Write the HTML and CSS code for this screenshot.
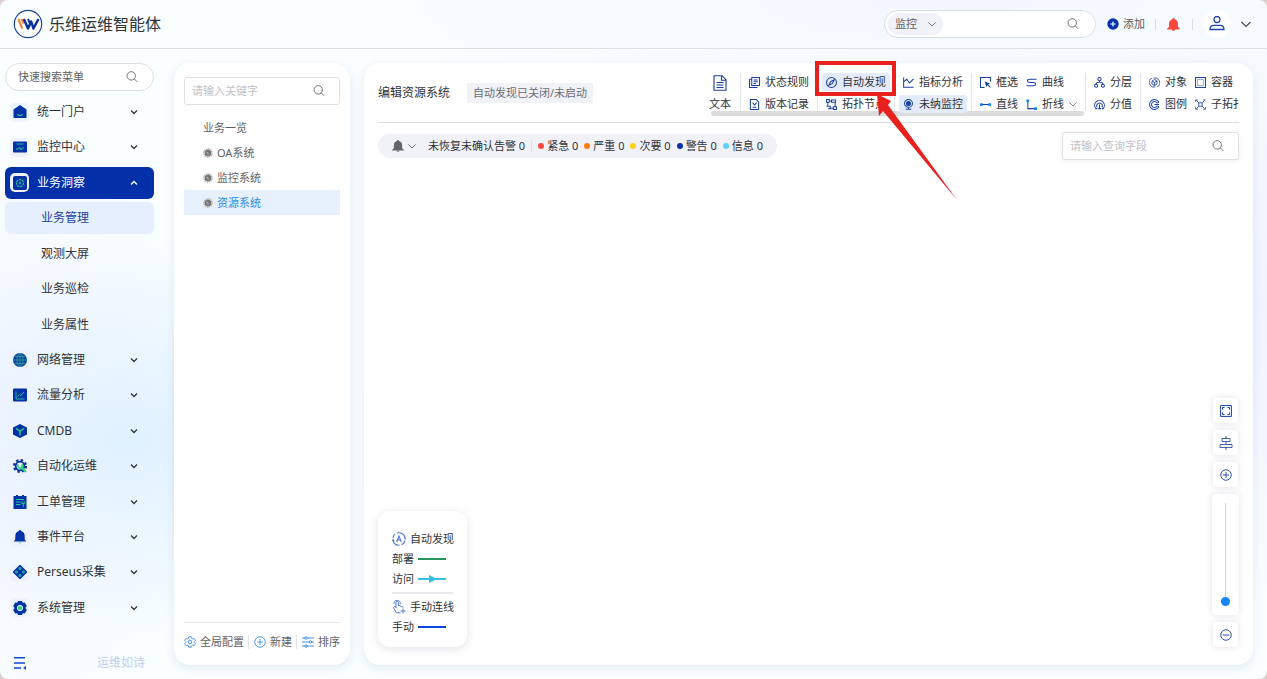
FILE: index.html
```html
<!DOCTYPE html>
<html lang="zh-CN">
<head>
  <meta charset="UTF-8" />
  <meta name="viewport" content="width=device-width, initial-scale=1.0"/>
  <title>乐维运维智能体</title>
  <link rel="stylesheet" href="styles.css">
</head>
<body>
  <!-- 图标 -->
  <svg class="sprite" aria-hidden="true">
    <symbol id="search" viewBox="0 0 16 16"><g fill="none" stroke="currentColor" stroke-width="1.2"><circle cx="7" cy="6.500" r="5.600"/><path d="M11 10.500l4 4"/></g></symbol>
    <symbol id="down" viewBox="0 0 10 10"><path d="M.5 3L5 7.500 9.500 3" fill="none" stroke="currentColor" stroke-width="1.1"/></symbol>
    <symbol id="caret" viewBox="0 0 8 8"><path d="M1 2.500l3 3 3-3" fill="none" stroke="currentColor" stroke-width="1.3"/></symbol>
    <symbol id="bell" viewBox="0 0 16 16"><path d="M8 0c.9 0 1.400.6 1.400 1.400C12.300 2.200 13.500 4.300 13.500 7V11l2.200 2v1H.3v-1l2.200-2V7c0-2.700 1.200-4.800 4.100-5.600C6.600.6 7.100 0 8 0zM6 14.300h4a2 1.500 0 0 1-4 0z" fill="currentColor"/></symbol>
    <symbol id="plus" viewBox="0 0 16 16"><g fill="none" stroke="currentColor" stroke-width="1.2"><circle cx="8" cy="8" r="7"/><path d="M8 4v8M4 8h8"/></g></symbol>
    <symbol id="minus" viewBox="0 0 16 16"><g fill="none" stroke="currentColor" stroke-width="1.2"><circle cx="8" cy="8" r="7"/><path d="M3.500 8h9"/></g></symbol>
    <symbol id="gear" viewBox="0 0 16 16"><g fill="none" stroke="currentColor" stroke-width="1.2" stroke-linejoin="round"><path d="M6.500 1h3l.6 2 1.500.9 2.100-.5 1.500 2.600L13.700 7.500v1.200l1.500 1.400-1.500 2.600-2.100-.5-1.500.9-.6 2h-3l-.6-2-1.500-.9-2.100.5L.8 10.100l1.500-1.400V7.500L.8 6l1.500-2.600 2.100.5L5.900 3z"/><circle cx="8" cy="8" r="2.400"/></g></symbol>
    <symbol id="hex" viewBox="0 0 10 10"><circle cx="5" cy="5" r="4.300" fill="none" stroke="#b4b4b4" stroke-width="1.200" stroke-dasharray="1.500 .7"/><path d="M5 1.200l3.300 1.900v3.800L5 8.800 1.700 6.900V3.100z" fill="#757575"/><path d="M3.200 4l1.800.8v2.200" stroke="#ccc" stroke-width=".7" fill="none"/></symbol>
  </svg>

  <div class="app">
    <header class="topbar">
      <svg class="logo" viewBox="0 0 30 30" aria-hidden="true">
        <circle cx="15" cy="15" r="13.700" fill="#fff" stroke="#1b459f" stroke-width="1.200"/>
        <path d="M5.300 10l4 9.500M8.600 10l2 4.700" stroke="#f58232" stroke-width="2" fill="none"/>
        <path d="M10.800 10l4.200 9.500 3.200-7 2.200 7L25.500 10" stroke="#0a33a0" stroke-width="2.500" fill="none" stroke-linejoin="round"/>
        <path d="M15 10l2 4.500" stroke="#0a33a0" stroke-width="2"/>
      </svg>
      <h1 class="brand">乐维运维智能体</h1>
      <div class="top-search">
        <div class="scope">
          <select aria-label="搜索范围"><option>监控</option></select>
          <svg class="i8"><use href="#down"/></svg>
        </div>
        <input type="text" aria-label="搜索">
        <svg class="i12"><use href="#search"/></svg>
      </div>
      <button class="add">
        <svg class="i12" viewBox="0 0 12 12"><circle cx="6" cy="6" r="5.700" fill="#0632a8"/><path d="M6 3.400v5.200M3.400 6h5.200" stroke="#fff" stroke-width="1.200"/></svg>
        添加
      </button>
      <span class="vline"></span>
      <button class="alarm" aria-label="告警"><svg class="i13"><use href="#bell"/></svg></button>
      <span class="vline"></span>
      <button class="avatar" aria-label="用户">
        <svg class="i16" viewBox="0 0 16 16"><g fill="none" stroke="#1c42a6" stroke-width="1.300"><circle cx="8" cy="3.500" r="3"/><path d="M1 13.500c0-3 2-4.200 4-4.200h6c2 0 4 1.200 4 4.200z"/></g></svg>
      </button>
      <button class="more" aria-label="更多"><svg class="i10"><use href="#down"/></svg></button>
    </header>

    <div class="body">
      <!-- 左侧菜单 -->
      <aside class="sidebar">
        <div class="field round">
          <input type="text" aria-label="快速搜索菜单" placeholder="快速搜索菜单">
          <svg class="i12"><use href="#search"/></svg>
        </div>
        <nav class="menu">
          <a href="#" class="item"><span class="tile"><svg viewBox="0 0 14 14"><path d="M7 0l6.500 4.500V13h-13V4.500z" fill="#0433a8"/><path d="M4.500 9.500q2.500 2 5 0" stroke="#2de08a" stroke-width="1.200" fill="none"/></svg></span>统一门户<svg class="i8"><use href="#caret"/></svg></a>
          <a href="#" class="item"><span class="tile"><svg viewBox="0 0 14 14"><rect y="1.500" width="14" height="11" rx="1" fill="#0433a8"/><path d="M3.500 4h7M3 9h2.500l1-2 1.500 3 1-2h2" stroke="#26b894" fill="none"/></svg></span>监控中心<svg class="i8"><use href="#caret"/></svg></a>
          <a href="#" class="item active"><span class="tile"><svg viewBox="0 0 14 14"><rect width="14" height="14" rx="2" fill="#0433a8"/><circle cx="7" cy="7" r="3.500" fill="none" stroke="#26c894" stroke-width="1.200" stroke-dasharray="2.300 .7"/><path d="M6.200 5.600v2.800L8.500 7z" fill="#26c894"/></svg></span>业务洞察<svg class="i8"><use href="#caret"/></svg></a>
          <a href="#" class="sub current">业务管理</a>
          <a href="#" class="sub">观测大屏</a>
          <a href="#" class="sub">业务巡检</a>
          <a href="#" class="sub">业务属性</a>
          <a href="#" class="item"><span class="tile"><svg viewBox="0 0 14 14"><circle cx="7" cy="7" r="7" fill="#0d3da0"/><g fill="none" stroke="#2aa69b" stroke-width=".8"><ellipse cx="7" cy="7" rx="3" ry="6.800"/><path d="M7 0v14M0 7h14M1.500 3.500h11M1.500 10.500h11"/></g></svg></span>网络管理<svg class="i8"><use href="#caret"/></svg></a>
          <a href="#" class="item"><span class="tile"><svg viewBox="0 0 14 14"><rect y=".5" width="14" height="13" rx="1" fill="#0433a8"/><path d="M3 3.500v7.500h8.500M4.500 8.500l2-2 1.500 1 3-3.500" stroke="#26b894" fill="none"/></svg></span>流量分析<svg class="i8"><use href="#caret"/></svg></a>
          <a href="#" class="item"><span class="tile"><svg viewBox="0 0 14 14"><path d="M7 0l7 3.500v7L7 14l-7-3.500v-7z" fill="#0433a8"/><path d="M3 4.500l4 2.500 4-2.500M7 7v4.500" stroke="#2de08a" stroke-width="1.200" fill="none"/></svg></span>CMDB<svg class="i8"><use href="#caret"/></svg></a>
          <a href="#" class="item"><span class="tile"><svg viewBox="0 0 14 14"><circle cx="7" cy="7" r="5.900" fill="none" stroke="#0433a8" stroke-width="2.200" stroke-dasharray="2.400 2.230"/><circle cx="7" cy="7" r="4.300" fill="#e9f2f8" stroke="#0433a8" stroke-width="1.800"/><path d="M5.300 5.300a2.300 2.300 0 1 0 3.400 0" fill="none" stroke="#2ddb7c" stroke-width="1.700"/><path d="M8.300 8.300l4.700 4.700" stroke="#2ddb7c" stroke-width="2.200"/></svg></span>自动化运维<svg class="i8"><use href="#caret"/></svg></a>
          <a href="#" class="item"><span class="tile"><svg viewBox="0 0 14 14"><path d="M.5 1h2.500V0h2v1h4V0h2v1h2.500v13H.5z" fill="#0433a8"/><path d="M3 4.500h8M3 7h4.500M3 9.500h4.500M10.300 9v3M8.800 6.500v2h3v-2" stroke="#26c894" fill="none"/></svg></span>工单管理<svg class="i8"><use href="#caret"/></svg></a>
          <a href="#" class="item"><span class="tile"><svg viewBox="0 0 14 14"><path d="M7 0c.7 0 1 .5 1 1 2.500.5 3.700 2.500 3.700 5v3.500l1.600 2H.7l1.600-2V6c0-2.500 1.200-4.500 3.700-5 0-.5.3-1 1-1z" fill="#0433a8"/><path d="M5.500 12.500h3q-1.500 2-3 0z" fill="#2de08a"/></svg></span>事件平台<svg class="i8"><use href="#caret"/></svg></a>
          <a href="#" class="item"><span class="tile"><svg viewBox="0 0 14 14"><path d="M7-.5L14.500 7 7 14.500-.5 7z" fill="#0433a8"/><g fill="#178daa" stroke="#2ac5a0" stroke-width=".6"><circle cx="7" cy="3.500" r="1.200"/><circle cx="3.500" cy="7" r="1.200"/><circle cx="10.500" cy="7" r="1.200"/><circle cx="7" cy="10.500" r="1.200"/></g></svg></span>Perseus采集<svg class="i8"><use href="#caret"/></svg></a>
          <a href="#" class="item"><span class="tile"><svg viewBox="0 0 14 14"><path d="M5 0h4l.8 1.800 2-.2 2 3.400L12.500 7l1.300 2-2 3.400-2-.2L9 14H5l-.8-1.800-2 .2L.2 9l1.300-2L.2 5l2-3.400 2 .2z" fill="#0433a8"/><circle cx="7" cy="7" r="2.700" fill="#2ddb7c" stroke="#d9f4ee"/></svg></span>系统管理<svg class="i8"><use href="#caret"/></svg></a>
        </nav>
        <div class="side-foot">
          <button aria-label="收起菜单"><svg class="i14" viewBox="0 0 14 14"><path d="M1 1.800h11M1 7h11M1 12h7" stroke="#1145cf" stroke-width="1.400"/><path d="M13 9.800v4L10 12z" fill="#1145cf"/></svg></button>
          <span>运维如诗</span>
        </div>
      </aside>

      <!-- 业务树 -->
      <section class="card tree">
        <div class="field">
          <input type="text" aria-label="关键字" placeholder="请输入关键字">
          <svg class="i12"><use href="#search"/></svg>
        </div>
        <ul>
          <li><a href="#">业务一览</a></li>
          <li><a href="#"><svg class="i10"><use href="#hex"/></svg>OA系统</a></li>
          <li><a href="#"><svg class="i10"><use href="#hex"/></svg>监控系统</a></li>
          <li><a href="#" class="current"><svg class="i10"><use href="#hex"/></svg>资源系统</a></li>
        </ul>
        <div class="tree-foot">
          <button><svg class="i12"><use href="#gear"/></svg>全局配置</button>
          <button><svg class="i12"><use href="#plus"/></svg>新建</button>
          <button><svg class="i12" viewBox="0 0 12 12"><g fill="#fff" stroke="currentColor"><path d="M0 2h12M0 6h12M0 10h12"/><circle cx="4" cy="2" r="1.200"/><circle cx="8.500" cy="6" r="1.200"/><circle cx="4" cy="10" r="1.200"/></g></svg>排序</button>
        </div>
      </section>

      <!-- 编辑区 -->
      <main class="card editor">
        <div class="editor-head">
          <h2>编辑资源系统</h2>
          <span class="state">自动发现已关闭/未启动</span>
          <div class="toolbar">
            <div class="tools">
              <div class="group single">
                <button><svg class="i16" viewBox="0 0 16 16"><path d="M2 .700h8l4 4v10.600H2zM9.500.7v4.500H14M4.500 7.500h7M4.500 10h7M4.500 12.500h7"/></svg>文本</button>
              </div>
              <div class="group">
                <button><svg class="i11" viewBox="0 0 12 12"><path d="M3 .600h8.400v8.800H3zM.6 2.500V11.400h8.500M3 2.500H.6M5 3.200h4.500M5 5.200h4.500M5 7.200h2.500"/></svg>状态规则</button>
                <button><svg class="i11" viewBox="0 0 12 12"><path d="M1.500.600h6.500l2.500 2.500v8.300h-9zM4 4l2 2.500L8.300 4M4 9h4"/></svg>版本记录</button>
              </div>
              <div class="group">
                <button class="on"><svg class="i11" viewBox="0 0 12 12"><circle cx="6" cy="6" r="5.400"/><path d="M8.800 3.200L7 7 3.200 8.800 5 5z"/></svg>自动发现</button>
                <button><svg class="i11" viewBox="0 0 12 12"><path d="M.600.600h3v3h-3zM6 1h4.500v2.500H6zM8 8.500h3.400v2.900H8zM3.600 2.200H6M2 3.600V8M.6 8h4v2.500h-2M4.600 10H8M10 3.500v5"/></svg>拓扑节点</button>
              </div>
              <div class="group">
                <button><svg class="i11" viewBox="0 0 12 12"><path d="M.700.500v10.700h10.800M1 5l3-2.500 3.200 4L11.500 2"/></svg>指标分析</button>
                <button class="on"><svg class="i11" viewBox="0 0 12 12"><circle cx="6" cy="4.800" r="4.300"/><circle cx="6" cy="4.800" r="2.200" fill="currentColor"/><path d="M6 9v2M3 11.300h6"/></svg>未纳监控</button>
              </div>
              <div class="group two">
                <button><svg class="i11" viewBox="0 0 12 12"><path d="M5 11.400H.6V.600h10.800V5M11.400 11.400L8 8"/><path d="M5 5l6 2-2.500 1.500L7 11z" fill="currentColor" stroke="none"/></svg>框选</button>
                <button><svg class="i11" viewBox="0 0 12 12"><path d="M11.500 2.500H4.500Q1.500 2.500 1.500 4T4 6h4q2.500 0 2.500 1.800T7.500 9.500H.5"/></svg>曲线</button>
                <button><svg class="i11" viewBox="0 0 12 12"><path d="M1 6h10"/><path d="M0 4.500h3v3H0zM9 4.500h3v3H9z" fill="#1785ff" stroke="none"/></svg>直线</button>
                <button><svg class="i11" viewBox="0 0 12 12"><path d="M2 2v8.500h9"/><path d="M.500.500h3v3h-3zM9 9h3v3H9z" fill="#1785ff" stroke="none"/></svg>折线<svg class="i8"><use href="#down"/></svg></button>
              </div>
              <div class="group">
                <button><svg class="i11" viewBox="0 0 12 12"><circle cx="6" cy="2.400" r="1.800"/><circle cx="2.300" cy="9.500" r="1.700"/><circle cx="9.700" cy="9.500" r="1.700"/><path d="M6 4.200v1.500M2.200 7.800Q2.500 5.800 6 5.800t3.800 2"/></svg>分层</button>
                <button><svg class="i11" viewBox="0 0 12 12"><path d="M2 10.500a5.300 5.300 0 1 1 8 0H8.500M2 10.500h1.500M3.300 9a3.100 3.100 0 1 1 5.400 0M6 6v4.500M4.500 10.500h3"/></svg>分值</button>
              </div>
              <div class="group two">
                <button><svg class="i11" viewBox="0 0 12 12"><g stroke-width=".9"><path d="M6 2.800l2.800 1.600v3.200L6 9.200 3.200 7.600V4.400zM3.200 4.400L6 6l2.800-1.600M6 6v3M3 1.500Q-1.500 3 1 8.500M9 10.500Q13.500 9 11 3.500M5 1.200Q9 0 11 3.500M7 10.800Q3 12 1 8.500"/></g></svg>对象</button>
                <button><svg class="i11" viewBox="0 0 12 12"><rect x=".6" y=".6" width="10.800" height="10.800"/><rect x="2.800" y="2.800" width="6.400" height="6.400" stroke="#9caed8"/></svg>容器</button>
                <button><svg class="i11" viewBox="0 0 12 12"><path d="M10.800 3.500A5.400 5.400 0 1 0 10.800 8.500M10.800 3.500L9 4.500M10.800 8.500L9 7.500M8.800 4.500a3.200 3.200 0 1 0 0 3M11 6H6"/></svg>图例</button>
                <button><svg class="i11" viewBox="0 0 12 12"><g stroke-width=".9"><rect x="4.200" y="4.200" width="3.600" height="3.600"/><path d="M4.200 4.200L1.500 1.500M7.800 4.200l2.700-2.700M4.200 7.800l-2.700 2.700M7.800 7.800l2.700 2.700M.5 3V1H3M9 1h2.500M.5 9v2H3M9 11h2.500V9"/></g></svg>子拓扑</button>
              </div>
            </div>
            <div class="scrollbar"></div>
          </div>
        </div>

        <div class="filters">
          <div class="alerts">
            <svg class="i12 mute"><use href="#bell"/></svg>
            <svg class="i8 fold"><use href="#down"/></svg>
            <span class="total">未恢复未确认告警 0</span>
            <span class="level urgent">紧急 0</span>
            <span class="level serious">严重 0</span>
            <span class="level minor">次要 0</span>
            <span class="level warn">警告 0</span>
            <span class="level info">信息 0</span>
          </div>
          <div class="field query">
            <input type="text" aria-label="查询字段" placeholder="请输入查询字段">
            <svg class="i12"><use href="#search"/></svg>
          </div>
        </div>

        <div class="canvas">
          <div class="legend">
            <div class="legend-title"><svg class="i14" viewBox="0 0 14 14"><path d="M5 1.100A6.200 6.200 0 0 1 13 5.500M13 8.500A6.200 6.200 0 0 1 9.500 12.700M7.500 13.200A6.200 6.200 0 0 1 1 8.500M.9 6A6.200 6.200 0 0 1 3 2.200M4.700 10L7 4 9.300 10M5.400 8h3.200" fill="none" stroke="#4a78d8" stroke-width="1.100"/><path d="M11.500 5.500H14l-.5 2.500zM0 9l1-2.500L2.800 9z" fill="#4a78d8"/></svg>自动发现</div>
            <div class="legend-row">部署<span class="line deploy"></span></div>
            <div class="legend-row">访问<svg class="visit" viewBox="0 0 28 8"><path d="M0 4h28" stroke="#36bfe0" stroke-width="2"/><path d="M11 0l8 4-8 4z" fill="#36bfe0"/></svg></div>
            <hr>
            <div class="legend-title"><svg class="i14" viewBox="0 0 14 14"><g fill="none" stroke="#4a78d8"><path d="M4 8V2.500a1.200 1.200 0 0 1 2.400 0V6M6.400 5.500q1-.5 1.600.5 1-.4 1.500.6 1.500-.3 1.500 1M4 7L2.500 6.500Q1 7 2 8.500l2.500 4.300h4M2 4a3.200 3.200 0 1 1 6.300 0M11 8.500v5M8.500 11h5"/></g></svg>手动连线</div>
            <div class="legend-row">手动<span class="line manual"></span></div>
          </div>

          <div class="zoom">
            <button aria-label="全屏"><svg class="i12" viewBox="0 0 12 12"><path d="M.600.600h10.800v10.800H.6zM2.500 4.500v-2h2M7.500 2.500h2v2M9.500 7.500v2h-2M4.500 9.500h-2v-2" fill="none" stroke="currentColor"/></svg></button>
            <button aria-label="居中"><svg class="i14" viewBox="0 0 14 14"><path d="M7 0v2.500M7 5.500v3M7 11.500V14M3 2.500h8v3H3zM1 8.500h12v3H1z" fill="none" stroke="currentColor" stroke-width=".8"/></svg></button>
            <button aria-label="放大"><svg class="i12"><use href="#plus"/></svg></button>
            <div class="slider"><input type="range" min="0" max="100" value="0" aria-label="缩放"></div>
            <button aria-label="缩小"><svg class="i12"><use href="#minus"/></svg></button>
          </div>
        </div>

        <!-- 操作提示 -->
        <svg class="hint" viewBox="0 0 144 140" aria-hidden="true">
          <rect x="3" y="2" width="77" height="31" fill="none" stroke="#e8201e" stroke-width="4"/>
          <path d="M63 33l14 7-3 4 69 95-74-89-4 5z" fill="#e8201e"/>
        </svg>
      </main>
    </div>
  </div>
</body>
</html>
```
FILE: styles.css
```css
* { box-sizing: border-box; }
body {
  margin: 0;
  background: #dccfd0;
  font-family: "Noto Sans", "Noto Sans CJK SC", sans-serif;
  font-size: 11px;
  line-height: 16px;
  color: #303338;
}
h1, h2, ul { margin: 0; padding: 0; font-weight: normal; }
ul { list-style: none; }
a { color: inherit; text-decoration: none; }
svg { display: block; flex: none; }
button, input, select {
  font: inherit;
  color: inherit;
  border: none;
  background: none;
  padding: 0;
  margin: 0;
  outline: none;
}
button { cursor: pointer; white-space: nowrap; }
.sprite { display: none; }
.i8 { width: 8px; height: 8px; }
.i10 { width: 10px; height: 10px; }
.i11 { width: 11px; height: 11px; }
.i12 { width: 12px; height: 12px; }
.i13 { width: 13px; height: 13px; }
.i14 { width: 14px; height: 14px; }
.i16 { width: 16px; height: 16px; }

.app {
  height: 100vh;
  display: flex;
  flex-direction: column;
  border-radius: 8px;
  overflow: hidden;
  background:
    radial-gradient(ellipse 240px 200px at 130px 440px, #e0f1ff, rgba(224,241,255,0)),
    radial-gradient(ellipse 200px 300px at 0 430px, #f3f5ff, rgba(243,245,255,0)),
    radial-gradient(ellipse 500px 300px at 100% 45%, #eef3ff, rgba(238,243,255,0)),
    radial-gradient(ellipse 600px 120px at 75% 0, #f3f8ff, rgba(243,248,255,0)),
    #f9feff;
}

/* 顶栏 */
.topbar {
  height: 49px;
  display: flex;
  align-items: center;
  padding: 0 16px 0 13px;
  border-bottom: 1px solid #dde1e4;
}
.logo { width: 30px; height: 30px; }
.brand {
  font-size: 16px;
  line-height: 24px;
  margin-left: 6px;
  margin-right: auto;
}
.top-search {
  width: 212px;
  height: 28px;
  display: flex;
  align-items: center;
  padding: 0 16px 0 3px;
  border: 1px solid #dcdde1;
  border-radius: 14px;
  background: #fff;
}
.top-search input { flex: 1; min-width: 0; }
.top-search > svg { color: #666; }
.scope {
  width: 55px;
  height: 22px;
  display: flex;
  align-items: center;
  justify-content: space-between;
  padding: 0 7px;
  border-radius: 11px;
  background: #f1f1f8;
  color: #606266;
}
.scope select { appearance: none; }
.add {
  display: flex;
  align-items: center;
  gap: 4px;
  margin: 0 10px 0 11px;
  color: #55585e;
}
.vline { width: 1px; height: 11px; background: #dadce2; }
.alarm { margin: 0 12px 0 11px; color: #ff463c; }
.avatar {
  width: 28px;
  height: 28px;
  display: grid;
  place-items: center;
  margin: 0 10px;
  border-radius: 50%;
  background: #fff;
}
.more { color: #444; }

.body {
  flex: 1;
  min-height: 0;
  display: flex;
  gap: 14px;
  padding: 14px 14px 14px 5px;
}
.card {
  background: #fff;
  border-radius: 16px;
  box-shadow: 0 3px 10px rgba(80,120,170,0.14);
}
.field {
  height: 28px;
  display: flex;
  align-items: center;
  padding: 0 14px 0 7px;
  border: 1px solid #dfe0e4;
  border-radius: 3px;
  background: #fff;
}
.field input { flex: 1; min-width: 0; }
.field input::placeholder { color: #bfc1c6; opacity: 1; }
.field svg { color: #666; }
.field.round { border-radius: 14px; padding: 0 15px 0 12px; }
.field.round input::placeholder { color: #606266; }

/* 左侧菜单 */
.sidebar {
  width: 149px;
  margin-right: 6px;
  display: flex;
  flex-direction: column;
  flex: none;
}
.menu {
  flex: 1;
  display: flex;
  flex-direction: column;
  justify-content: space-between;
  margin: 5px 0 32px;
  font-size: 12px;
}
.item, .sub {
  height: 32px;
  display: flex;
  align-items: center;
  border-radius: 6px;
}
.item { gap: 8px; padding: 0 16px 0 5px; }
.item > svg { margin-left: auto; }
.item.active { background: #0130a9; color: #fff; }
.item.active > svg { transform: rotate(180deg); }
.tile {
  width: 19px;
  height: 19px;
  display: grid;
  place-items: center;
  border-radius: 5px;
  background: #eef1fe;
}
.tile svg { width: 14px; height: 14px; }
.sub { padding-left: 36px; }
.sub.current { background: #e6effe; color: #1c42a0; }
.side-foot {
  display: flex;
  align-items: center;
  justify-content: space-between;
  padding: 0 9px 0 8px;
  height: 14px;
  margin-bottom: -5px;
  font-size: 12px;
  color: #c0cdf1;
}

/* 业务树 */
.tree {
  width: 176px;
  flex: none;
  display: flex;
  flex-direction: column;
  padding: 14px 10px;
}
.tree ul { margin-top: 10px; flex: 1; color: #606266; }
.tree li a {
  height: 25px;
  display: flex;
  align-items: center;
  gap: 4px;
  padding-left: 19px;
}
.tree li .current { background: #e7f1fe; color: #2d8ae8; }
.tree-foot {
  display: flex;
  justify-content: space-between;
  padding: 12px 0 2px;
  border-top: 1px solid #e6e7ea;
  color: #606266;
}
.tree-foot button { display: flex; align-items: center; gap: 4px; line-height: 14px; }
.tree-foot button + button { border-left: 1px solid #e3e4e8; padding-left: 5px; }
.tree-foot svg { color: #3a92e8; }

/* 编辑区 */
.editor {
  flex: 1;
  min-width: 0;
  position: relative;
  display: flex;
  flex-direction: column;
  padding: 0 14px;
}
.editor-head {
  height: 60px;
  display: flex;
  align-items: center;
  border-bottom: 1px solid #dcdde0;
}
.editor-head h2 { font-size: 12px; white-space: nowrap; }
.state {
  margin-left: 17px;
  padding: 2px 6px;
  background: #f1f1f8;
  color: #6b6e74;
  white-space: nowrap;
}
.toolbar {
  flex: 0 1 530px;
  min-width: 0;
  margin-left: auto;
  overflow: hidden;
  padding-top: 4px;
}
.tools { display: flex; height: 38px; }
.group {
  flex: none;
  display: grid;
  grid-template-rows: 18px 18px;
  row-gap: 4px;
  padding: 0 4px;
  border-left: 1px solid #e4e5ea;
}
.group.two { grid-template-columns: auto auto; }
.group button {
  display: flex;
  align-items: center;
  gap: 5px;
  padding: 0 4px;
  border-radius: 3px;
}
.group button svg {
  color: #173f9f;
  fill: none;
  stroke: currentColor;
  stroke-width: 1.1;
}
.group button .i8 { color: #777; }
.group .on { background: #e4ebfc; }
.group.single { display: block; border: none; padding: 0 9px 0 0; }
.group.single button { flex-direction: column; padding: 2px 0 0; }
.scrollbar {
  width: 373px;
  max-width: 100%;
  height: 5px;
  margin-left: 2px;
  border-radius: 3px;
  background: #dcdcdc;
}
.filters {
  display: flex;
  align-items: center;
  justify-content: space-between;
  padding-top: 9px;
}
.alerts {
  height: 24px;
  display: flex;
  align-items: center;
  padding: 0 14px;
  border-radius: 12px;
  background: #f1f1f8;
}
.mute { color: #666; }
.fold { margin: 0 12px 0 4px; color: #666; }
.total {
  padding-right: 6px;
  margin-right: 6px;
  border-right: 1px solid #dfe0e8;
  line-height: 12px;
}
.level { display: flex; align-items: center; gap: 3px; }
.level + .level { margin-left: 6px; }
.level::before {
  content: "";
  width: 6px;
  height: 6px;
  border-radius: 50%;
}
.urgent::before { background: #ff463c; }
.serious::before { background: #ff7a14; }
.minor::before { background: #ffcf1c; }
.warn::before { background: #0632a8; }
.info::before { background: #5ed4fc; }
.query { width: 177px; box-shadow: 0 1px 5px rgba(0,0,0,0.08); }

.canvas {
  flex: 1;
  display: flex;
  align-items: flex-end;
  justify-content: space-between;
  padding-bottom: 18px;
}
.legend {
  width: 89px;
  padding: 18px 14px 10px;
  border-radius: 12px;
  background: #fff;
  box-shadow: 0 2px 10px rgba(60,70,100,0.15);
}
.legend-title, .legend-row {
  height: 20px;
  display: flex;
  align-items: center;
  gap: 4px;
  white-space: nowrap;
}
.legend hr { height: 2px; border: none; background: #e8e8ec; margin: 3px 0; }
.line { width: 28px; height: 2px; }
.deploy { background: #27965f; }
.manual { background: #0b45e6; }
.visit { width: 28px; height: 8px; }

.zoom { display: flex; flex-direction: column; align-items: center; gap: 7px; }
.zoom button, .slider {
  width: 25px;
  height: 25px;
  display: grid;
  place-items: center;
  border-radius: 4px;
  background: #fff;
  color: #173f9f;
  box-shadow: 0 0 6px rgba(60,70,100,0.16);
}
.zoom .slider { width: 27px; height: 121px; }
.slider input {
  appearance: none;
  writing-mode: vertical-lr;
  direction: rtl;
  width: 9px;
  height: 103px;
}
.slider input::-webkit-slider-runnable-track {
  width: 1px;
  height: 100%;
  background: #d4d5d9;
}
.slider input::-webkit-slider-thumb {
  appearance: none;
  width: 9px;
  height: 9px;
  margin-left: -4px;
  border-radius: 50%;
  background: #1785ff;
}

.hint {
  position: absolute;
  top: -2px;
  right: 295px;
  width: 144px;
  height: 140px;
  pointer-events: none;
}
```
